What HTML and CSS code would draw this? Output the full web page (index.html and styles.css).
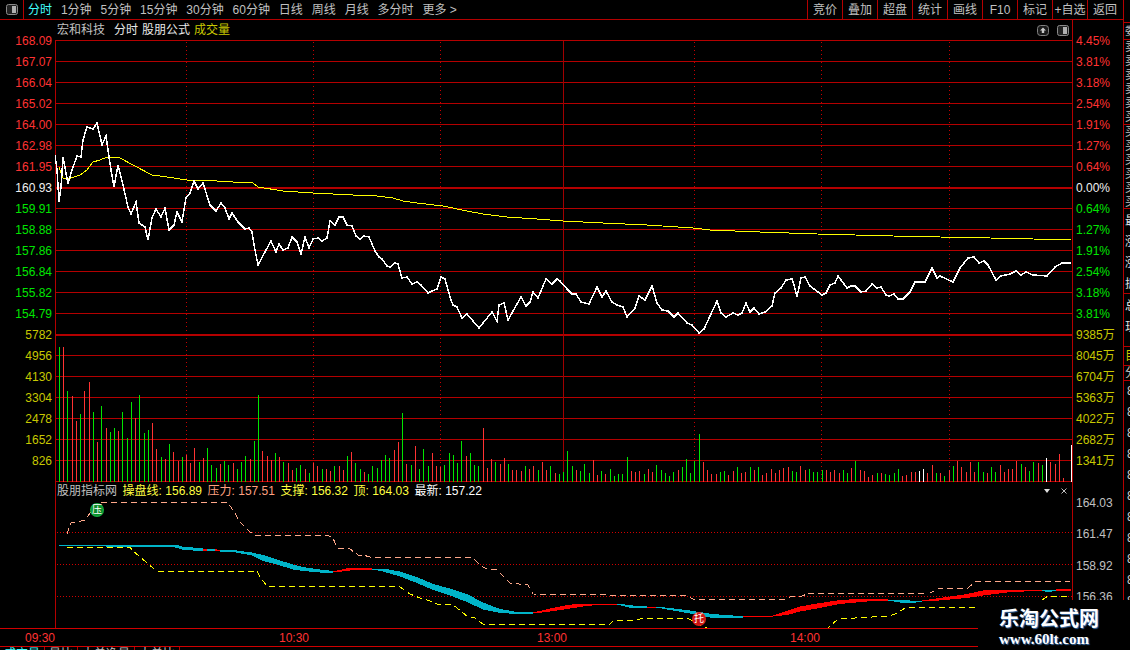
FILE: index.html
```html
<!DOCTYPE html>
<html>

<head>
  <title>分时</title>
  <link rel="stylesheet" href="styles.css">
</head>

<body>
  <div class="app">
    <div class="main">
      <header class="toolbar">
        <div class="panel_btn">
          <svg width="12" height="11" viewBox="0 0 12 11">
            <rect x="0.5" y="0.5" width="11" height="10" rx="2" fill="#222" stroke="#8a8a8a" />
            <rect x="6" y="2" width="4" height="7" fill="#b0b0b0" />
          </svg>
        </div>
        <nav class="periods">
          <a class="active">分时</a>
          <a>1分钟</a>
          <a>5分钟</a>
          <a>15分钟</a>
          <a>30分钟</a>
          <a>60分钟</a>
          <a>日线</a>
          <a>周线</a>
          <a>月线</a>
          <a>多分时</a>
          <a>更多 &gt;</a>
        </nav>
        <nav class="actions">
          <a>竞价</a>
          <a>叠加</a>
          <a>超盘</a>
          <a>统计</a>
          <a>画线</a>
          <a>F10</a>
          <a>标记</a>
          <a>+自选</a>
          <a>返回</a>
        </nav>
      </header>

      <section class="stage">
        <div class="axis axis_left">
          <p class="up">168.09</p>
          <p class="up">167.07</p>
          <p class="up">166.04</p>
          <p class="up">165.02</p>
          <p class="up">164.00</p>
          <p class="up">162.98</p>
          <p class="up">161.95</p>
          <p class="flat">160.93</p>
          <p class="down">159.91</p>
          <p class="down">158.88</p>
          <p class="down">157.86</p>
          <p class="down">156.84</p>
          <p class="down">155.82</p>
          <p class="down">154.79</p>
          <p class="vol">5782</p>
          <p class="vol">4956</p>
          <p class="vol">4130</p>
          <p class="vol">3304</p>
          <p class="vol">2478</p>
          <p class="vol">1652</p>
          <p class="vol">826</p>
        </div>

        <div class="plot">
          <svg id="chart" class="chart" width="1017" height="608" viewBox="55 20 1017 608"></svg>

          <div class="pane_head title_head">
            <span class="muted">宏和科技</span>
            <span class="wide">分时</span>
            <span>股朋公式</span>
            <span class="vol">成交量</span>
            <span class="tools">
              <svg width="12" height="11" viewBox="0 0 12 11">
                <rect x="0.5" y="0.5" width="11" height="10" rx="3" fill="#1a1a1a" stroke="#808080" />
                <path d="M6 2.5 9 5.5H7.2V8H4.8V5.5H3Z" fill="#c8c8c8" />
              </svg>
              <svg width="12" height="11" viewBox="0 0 12 11">
                <rect x="0.5" y="0.5" width="11" height="10" rx="2" fill="#222" stroke="#8a8a8a" />
                <rect x="6" y="2" width="4" height="7" fill="#b0b0b0" />
              </svg>
            </span>
          </div>

          <div class="pane_head index_head">
            <span class="muted">股朋指标网</span>
            <span class="yellow">操盘线: 156.89</span>
            <span class="peach">压力: 157.51</span>
            <span class="yellow">支撑: 156.32</span>
            <span class="yellow">顶: 164.03</span>
            <span class="white">最新: 157.22</span>
            <span class="tools index_tools">
              <svg width="6" height="4" viewBox="0 0 6 4">
                <path d="M0 0H6L3 4Z" fill="#e0e0e0" />
              </svg>
              <svg width="6" height="6" viewBox="0 0 6 6">
                <path d="M0.5 0.5 5.5 5.5M5.5 0.5 0.5 5.5" stroke="#c0c0c0" fill="none" />
              </svg>
            </span>
          </div>

          <span class="badge badge_press">压</span>
          <span class="badge badge_hold">托</span>
        </div>

        <div class="axis axis_right">
          <p class="up">4.45%</p>
          <p class="up">3.81%</p>
          <p class="up">3.18%</p>
          <p class="up">2.54%</p>
          <p class="up">1.91%</p>
          <p class="up">1.27%</p>
          <p class="up">0.64%</p>
          <p class="flat">0.00%</p>
          <p class="down">0.64%</p>
          <p class="down">1.27%</p>
          <p class="down">1.91%</p>
          <p class="down">2.54%</p>
          <p class="down">3.18%</p>
          <p class="down">3.81%</p>
          <p class="vol">9385万</p>
          <p class="vol">8045万</p>
          <p class="vol">6704万</p>
          <p class="vol">5363万</p>
          <p class="vol">4022万</p>
          <p class="vol">2682万</p>
          <p class="vol">1341万</p>
          <div class="index_scale">
            <p>164.03</p>
            <p>161.47</p>
            <p>158.92</p>
            <p>156.36</p>
          </div>
        </div>
      </section>

      <footer class="timebar">
        <span>09:30</span>
        <span>10:30</span>
        <span>13:00</span>
        <span>14:00</span>
      </footer>

      <nav class="tabs">
        <a class="active">成交量</a>
        <a>量比</a>
        <a>大单净量</a>
        <a>大单比</a>
      </nav>
    </div>

    <aside class="side">
      <div class="side_box side_a"><p>委托</p></div>
      <div class="side_box side_b">
        <p>卖</p><p>卖</p><p>卖</p><p>卖</p><p>卖</p><p>买</p>
      </div>
      <div class="side_box side_b">
        <p>买</p><p>买</p><p>买</p><p>买</p><p>买</p><p>买</p>
      </div>
      <div class="side_box side_c">
        <p>最新</p><p>涨跌</p><p>涨幅</p><p>振幅</p>
      </div>
      <div class="side_box side_c side_d">
        <p>总手</p><p>现手</p>
      </div>
      <div class="side_box side_e"><p>目</p></div>
      <div class="side_box side_f"><p>分</p></div>
      <div class="side_box side_g">
        <p>88</p><p>88</p><p>88</p><p>88</p><p>88</p><p>88</p><p>88</p><p>88</p><p>88</p><p>88</p><p>88</p>
      </div>
    </aside>

    <div class="watermark">
      <strong>乐淘公式网</strong>
      <em>www.60lt.com</em>
    </div>
  </div>

  <script src="chart.js"></script>
</body>

</html>
```

FILE: styles.css
```css
* {
  box-sizing: border-box;
}

html,
body {
  margin: 0;
  height: 100%;
  background-color: #000;
  overflow: hidden;
}

body {
  color: #c0c0c0;
  font: 12px/1 "Liberation Sans", "Noto Sans CJK SC", sans-serif;
}

p {
  margin: 0;
}

a {
  color: inherit;
}

.app {
  display: flex;
  position: relative;
  width: 1130px;
  height: 650px;
  overflow: hidden;
}

.main {
  display: flex;
  flex-direction: column;
  width: 1123px;
}

/* TOOLBAR */
.toolbar {
  display: flex;
  flex: none;
  align-items: stretch;
  height: 20px;
  border-bottom: 1px solid #b40000;
}

.panel_btn {
  display: flex;
  align-items: center;
  justify-content: center;
  width: 24px;
  border-right: 1px solid #b40000;
}

.periods {
  display: flex;
  align-items: center;
  gap: 8.9px;
  padding-left: 4px;
}

.periods .active,
.tabs .active {
  color: #40ffff;
}

.actions {
  display: grid;
  grid-template-columns: repeat(9, 35px);
  margin-left: auto;
  padding-right: 1px;
}

.actions a {
  display: flex;
  align-items: center;
  justify-content: center;
  border-left: 1px solid #b40000;
}

/* CHART */
.stage {
  display: flex;
  flex: none;
  height: 608px;
}

.axis {
  flex: none;
  padding-top: 11px;
}

.axis p {
  height: 21px;
  line-height: 21px;
}

.axis_left {
  width: 55px;
  padding-right: 3px;
  text-align: right;
}

.axis_right {
  width: 51px;
  padding-left: 3px;
  border-left: 1px solid #b40000;
}

.index_scale {
  margin-top: 16px;
}

.index_scale p {
  height: 31.4px;
  line-height: 31.4px;
}

.up {
  color: #ff3232;
}

.flat {
  color: #f0f0f0;
}

.down {
  color: #00e600;
}

.vol {
  color: #c8c800;
}

.plot {
  position: relative;
  width: 1017px;
}

.chart {
  display: block;
}

.pane_head {
  display: flex;
  position: absolute;
  left: 0;
  width: 100%;
  height: 18px;
  align-items: center;
  gap: 5.6px;
  padding-left: 2px;
  color: #e8e8e8;
  white-space: nowrap;
}

.title_head {
  top: 1px;
  gap: 4px;
}

.index_head {
  top: 462px;
}

.title_head .wide {
  margin-left: 5px;
}

.pane_head .muted {
  color: #c0c0c0;
}

.yellow {
  color: #ffff40;
}

.peach {
  color: #ffa080;
}

.white {
  color: #fff;
}

.tools {
  display: flex;
  align-items: center;
  gap: 8px;
  margin-left: auto;
  padding-right: 3px;
}

.index_tools {
  gap: 11px;
  padding-right: 5px;
}

.badge {
  position: absolute;
  width: 14px;
  height: 14px;
  border-radius: 50%;
  color: #fff;
  font-size: 10px;
  line-height: 14px;
  text-align: center;
}

.badge_press {
  left: 35px;
  top: 483px;
  background: radial-gradient(circle, #0a8a2a 45%, #20e060 100%);
}

.badge_hold {
  left: 637px;
  top: 592px;
  background: radial-gradient(circle, #c81010 45%, #ff3a20 100%);
}

/* TIME AXIS */
.timebar {
  display: grid;
  flex: none;
  grid-template-columns: 254px 258px 253px 100px;
  align-items: center;
  height: 19px;
  padding-left: 25px;
  border-top: 1px solid #d00000;
  border-bottom: 1px solid #d00000;
  color: #ff3232;
}

.tabs {
  display: flex;
  flex: none;
  height: 3px;
  overflow: hidden;
}

.tabs a {
  padding: 1px 4px 0;
  border-right: 1px solid #b40000;
}

/* SIDE STRIP */
.side {
  display: flex;
  flex: none;
  flex-direction: column;
  width: 7px;
  height: 600px;
  padding-top: 22px;
  border-left: 1px solid #b40000;
  overflow: hidden;
}

.side_box {
  flex: none;
  padding-left: 1px;
  border-top: 1px solid #b40000;
  overflow: hidden;
  white-space: nowrap;
}

.side_a {
  height: 17px;
  font-size: 11px;
  line-height: 16px;
}

.side_b {
  height: 85px;
  line-height: 14px;
}

.side_b + .side_b {
  height: 84px;
}

.side_c {
  height: 85px;
  padding-top: 2px;
  line-height: 21px;
  color: #e0e0e0;
}

.side_d {
  height: 53px;
}

.side_e {
  height: 19px;
  line-height: 19px;
  color: #c8c800;
}

.side_f {
  height: 15px;
  line-height: 15px;
}

.side_g {
  padding-left: 3px;
  line-height: 21px;
  color: #d0d0d0;
}

/* WATERMARK */
.watermark {
  display: flex;
  position: absolute;
  right: 0;
  bottom: 0;
  flex-direction: column;
  align-items: flex-start;
  width: 152px;
  height: 50px;
  padding: 6px 0 0 21px;
  background-color: #000;
  color: #fff;
}

.watermark strong {
  font: bold 20px/24px "Noto Sans CJK SC", sans-serif;
  text-shadow: 1px 1px 1px #3a6ea8;
}

.watermark em {
  margin-top: 1px;
  font: bold 15px/16px "Liberation Serif", serif;
  text-shadow: 1px 1px 1px #3a6ea8;
}
```

FILE: chart.js
```js
// PRICE
const price = [[55,155],[57,170],[59,202],[61,187],[63,157],[66,173],[68,184],[72,170],[77,156],[81,157],[83,140],[87,127],[93,129],[97,123],[102,145],[106,136],[108,150],[111,170],[114,187],[118,165],[123,185],[128,207],[131,214],[136,202],[139,223],[145,227],[148,240],[152,218],[156,209],[161,217],[165,208],[169,230],[174,225],[177,212],[182,222],[186,198],[190,193],[194,181],[198,189],[203,183],[210,205],[216,211],[221,203],[225,208],[229,219],[232,213],[238,222],[245,229],[249,228],[252,232],[255,250],[258,265],[265,252],[271,241],[276,252],[279,244],[283,250],[288,248],[292,237],[297,242],[301,254],[305,237],[309,248],[313,239],[318,238],[322,241],[327,238],[330,221],[335,225],[339,217],[343,217],[347,225],[352,226],[356,236],[360,239],[364,236],[369,237],[375,251],[379,257],[382,259],[387,266],[390,267],[395,263],[398,264],[402,278],[407,277],[412,284],[417,282],[421,285],[428,293],[432,291],[437,289],[441,277],[445,279],[450,297],[453,305],[457,307],[462,318],[467,314],[479,328],[492,312],[497,321],[499,305],[504,303],[508,320],[521,297],[526,306],[530,302],[533,292],[538,298],[546,279],[552,284],[557,279],[560,281],[567,289],[572,294],[576,294],[581,302],[589,304],[597,287],[602,297],[606,291],[612,302],[617,305],[623,307],[627,317],[635,308],[639,296],[645,300],[652,286],[657,303],[662,310],[668,311],[674,317],[678,313],[687,323],[692,325],[699,333],[704,329],[717,301],[721,313],[726,317],[733,313],[738,315],[742,313],[746,303],[750,312],[754,308],[759,314],[765,312],[772,306],[775,293],[781,288],[786,280],[792,279],[794,285],[797,297],[801,278],[805,277],[810,286],[822,295],[826,293],[830,285],[835,283],[838,276],[847,288],[851,286],[855,286],[861,292],[866,291],[872,284],[877,288],[881,287],[886,295],[889,296],[894,294],[898,299],[903,299],[910,292],[915,282],[925,282],[932,268],[937,278],[940,276],[953,282],[960,268],[968,258],[974,257],[979,263],[984,261],[988,265],[996,280],[1001,276],[1010,274],[1016,271],[1021,275],[1026,272],[1033,275],[1047,276],[1055,267],[1062,263],[1071,263]]
const average = [[59,167],[63,178],[68,179],[80,175],[87,170],[93,162],[100,160],[107,157],[120,158],[133,165],[152,175],[167,177],[187,180],[217,181],[233,182],[253,183],[258,187],[283,191],[313,193],[333,194],[353,195],[377,196],[393,198],[403,201],[417,203],[443,206],[467,211],[483,214],[507,217],[537,219],[563,221],[603,223],[647,225],[693,228],[710,230],[760,232],[817,234],[893,236],[940,237],[990,238],[1033,239],[1071,240]]

// VOLUME
const volTops = [347,347,391,396,421,414,391,382,412,442,406,428,432,428,431,412,438,402,418,395,433,430,423,449,457,459,444,452,461,457,455,463,448,462,458,448,465,468,464,461,465,463,469,462,456,459,441,395,451,456,460,453,457,462,463,470,468,465,469,473,463,466,469,469,471,466,466,470,456,452,463,469,472,474,466,468,460,455,458,450,442,413,464,465,446,469,449,466,453,466,467,465,453,455,463,441,456,453,465,466,428,468,459,462,464,458,464,470,470,471,466,469,466,470,462,470,466,473,474,472,451,466,470,471,464,473,460,475,471,474,469,476,474,474,457,471,472,471,474,469,472,465,470,473,476,472,470,467,459,473,461,434,462,470,474,474,472,471,475,471,467,473,472,467,470,467,475,473,469,473,470,468,467,471,472,466,470,469,472,472,470,470,472,470,473,470,473,468,461,470,471,477,475,473,473,474,475,473,469,476,475,472,472,471,469,473,465,473,473,476,470,466,461,467,472,462,472,462,472,473,467,472,465,472,469,469,461,464,467,471,462,463,465,458,462,464,454,478]
const volCols = 'grgrrgrrgr' + 'grggrgggrg' + 'ggrrgrgrrg' + 'rrrgrgggrg' + 'grgggrggrr' + 'rgrgrrggrg' + 'rrgrrgrrgr' + 'ggrggggggr' + 'rgrgrgggrr' + 'rgggggrggg' + 'rrrgrrgrrr' + 'grrgrrgrgg' + 'ggrgggrrgr' + 'gggggrrrgr' + 'rgggggrggg' + 'ggrrrrggrr' + 'grrgrgrrrr' + 'rrrgg' + 'rrggggrrrr' + 'ggrgrrrrgr' + 'ggggrrrrww' + 'rrgrgrgrrr' + 'rrggrggrrr' + 'rrgrggrgwr' + 'rrr'
const barColors = { g: '#00e600', r: '#ff3232', w: '#ffffff' }

// INDEX PANE
const pressure = [[67,534],[71,523],[77,522],[85,520],[90,513],[102,502],[227,502],[233,510],[240,522],[250,532],[254,535],[327,535],[333,538],[337,548],[350,549],[358,555],[363,555],[370,557],[472,557],[480,565],[485,568],[497,570],[510,583],[528,585],[533,594],[687,596],[693,599],[785,599],[793,596],[802,596],[807,594],[930,593],[940,588],[968,588],[975,582],[1070,581]]
const support = [[67,547],[130,547],[133,551],[153,568],[156,571],[257,571],[260,577],[267,586],[400,587],[410,594],[420,598],[430,601],[437,604],[452,604],[462,612],[468,617],[475,618],[483,624],[610,624],[613,621],[637,620],[643,618],[687,618],[697,623],[703,627],[707,628],[828,628],[838,619],[890,616],[897,613],[905,608],[1042,607],[1042,600],[1048,596],[1070,596]]
const cloud = [
  ['c', [[59,545,1],[130,546,2],[175,546,3],[182,548,3],[203,550,3]]],
  ['r', [[203,550,2],[207,550,1]]],
  ['c', [[207,550,2],[215,550,2]]],
  ['r', [[215,550,2],[220,551,1]]],
  ['c', [[220,551,2],[233,551,2],[252,554,3],[263,558,6],[277,562,5],[293,567,5],[303,569,4],[320,571,3],[333,572,2]]],
  ['r', [[333,572,1],[350,569,3],[372,569,1]]],
  ['c', [[372,569,1],[383,570,3],[400,574,5],[417,580,6],[433,587,6],[450,592,7],[467,598,8],[483,606,7],[500,611,4],[517,613,2],[533,613,1]]],
  ['r', [[533,613,1],[550,610,3],[567,607,4],[583,605,3],[600,604,1],[617,604,1]]],
  ['c', [[617,604,1],[633,607,3],[647,607,2]]],
  ['r', [[647,607,1],[656,607,1]]],
  ['c', [[656,607,1],[670,609,2],[690,612,3],[712,616,4],[733,617,3],[743,617,1]]],
  ['r', [[743,617,1],[773,616,1],[787,613,4],[800,609,5],[817,606,5],[840,602,4],[867,600,3],[888,600,1]]],
  ['c', [[888,600,1],[900,601,3],[910,602,3],[922,601,1]]],
  ['r', [[922,601,1],[933,600,2],[950,598,3],[967,596,4],[983,593,5],[1007,591,3],[1042,590,1]]],
  ['c', [[1042,590,1],[1048,591,3],[1056,590,1]]],
  ['r', [[1056,590,1],[1071,590,2]]],
]
const cloudColors = { c: '#00b4c8', r: '#ff0000' }

const line = (x1, y1, x2, y2, color, width, dash) =>
  `<line x1="${x1}" y1="${y1}" x2="${x2}" y2="${y2}" stroke="${color}" stroke-width="${width}"${dash ? ` stroke-dasharray="${dash}"` : ''}/>`
const poly = (points, color, width, dash) =>
  `<polyline points="${points.join(' ')}" fill="none" stroke="${color}" stroke-width="${width}"${dash ? ` stroke-dasharray="${dash}"` : ''}/>`

let out = ''

// grid
for (let i = 0; i < 21; i++) {
  const y = 40 + 21 * i
  if (i == 7 || i == 14) {
    out += line(55, y + 1, 1072, y + 1, '#b40000', 2)
  } else {
    out += line(55, y + 0.5, 1072, y + 0.5, '#b40000', 1)
  }
}
out += line(55, 481.5, 1072, 481.5, '#b40000', 1)
out += line(55.5, 40, 55.5, 628, '#b40000', 1)

for (const x of [186, 313, 440, 694, 821, 949]) {
  out += line(x + 0.5, 42, x + 0.5, 481, '#c80000', 1, '1 3')
}
out += line(563.5, 41, 563.5, 481, '#a00000', 1)

for (const y of [532, 564, 596]) {
  out += line(57, y + 0.5, 1072, y + 0.5, '#d00000', 1, '1 2')
}

// volume bars
volTops.forEach((top, i) => {
  const x = Math.floor(59.4 + 4.237 * i) + 0.5
  out += line(x, top, x, 482, barColors[volCols[i]], 1)
})
out += line(1071.5, 445, 1071.5, 482, '#ffffff', 1)

// price
out += poly(average, '#ffff00', 1)
out += poly(price, '#ffffff', 1.5)

// index pane
out += poly(pressure, '#ffa88a', 1, '6 4')
out += poly(support, '#ffff00', 1, '6 4')
cloud.forEach(([color, pts]) => {
  const top = pts.map(([x, y, t]) => [x, y - t / 2])
  const bottom = pts.map(([x, y, t]) => [x, y + t / 2]).reverse()
  out += `<polygon points="${top.concat(bottom).join(' ')}" fill="${cloudColors[color]}"/>`
})

const chart = document.querySelector('#chart')
chart.setAttribute('shape-rendering', 'crispEdges')
chart.innerHTML = out
```
